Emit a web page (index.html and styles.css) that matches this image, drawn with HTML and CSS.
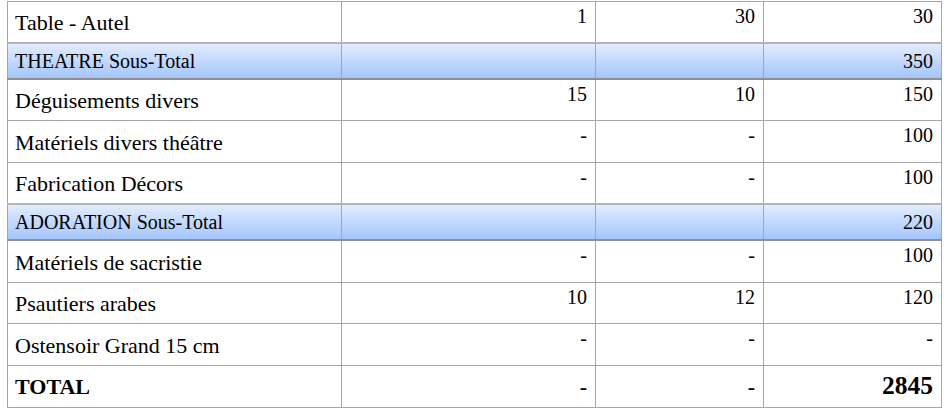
FILE: index.html
```html
<!DOCTYPE html>
<html lang="fr">
<head>
    <meta charset="UTF-8">
    <title>Budget</title>
    <link rel="stylesheet" href="styles.css">
</head>
<body>
<table class="budget">
    <colgroup>
        <col class="col-label">
        <col class="col-qty">
        <col class="col-price">
        <col class="col-total">
    </colgroup>
    <tr>
        <td class="label">Table - Autel</td>
        <td class="num">1</td>
        <td class="num">30</td>
        <td class="num">30</td>
    </tr>
    <tr class="subtotal">
        <td class="label">THEATRE Sous-Total</td>
        <td class="num"></td>
        <td class="num"></td>
        <td class="num">350</td>
    </tr>
    <tr>
        <td class="label">Déguisements divers</td>
        <td class="num">15</td>
        <td class="num">10</td>
        <td class="num">150</td>
    </tr>
    <tr>
        <td class="label">Matériels divers théâtre</td>
        <td class="num">-</td>
        <td class="num">-</td>
        <td class="num">100</td>
    </tr>
    <tr>
        <td class="label">Fabrication Décors</td>
        <td class="num">-</td>
        <td class="num">-</td>
        <td class="num">100</td>
    </tr>
    <tr class="subtotal">
        <td class="label">ADORATION Sous-Total</td>
        <td class="num"></td>
        <td class="num"></td>
        <td class="num">220</td>
    </tr>
    <tr>
        <td class="label">Matériels de sacristie</td>
        <td class="num">-</td>
        <td class="num">-</td>
        <td class="num">100</td>
    </tr>
    <tr>
        <td class="label">Psautiers arabes</td>
        <td class="num">10</td>
        <td class="num">12</td>
        <td class="num">120</td>
    </tr>
    <tr>
        <td class="label">Ostensoir Grand 15 cm</td>
        <td class="num">-</td>
        <td class="num">-</td>
        <td class="num">-</td>
    </tr>
    <tr class="total">
        <td class="label">TOTAL</td>
        <td class="num">-</td>
        <td class="num">-</td>
        <td class="num grand">2845</td>
    </tr>
</table>
</body>
</html>
```

FILE: styles.css
```css
body {
    margin: 0;
    background-color: white;
    font-family: "Liberation Serif", "Times New Roman", serif;
    color: black;
}

.budget {
    border-collapse: collapse;
    table-layout: fixed;
    width: 934px;
    margin: 1px 0 0 7px;
}

.col-label { width: 334px; }
.col-qty { width: 254px; }
.col-price { width: 168px; }
.col-total { width: 178px; }

.budget td {
    border: 1px solid #a6a6a6;
    height: 41.8px;
    box-sizing: border-box;
    padding: 0 8px 0 7px;
    white-space: nowrap;
}

.label {
    font-size: 22px;
    vertical-align: bottom;
    padding-bottom: 6px !important;
}

.num {
    font-size: 20px;
    text-align: right;
    vertical-align: top;
    padding-top: 3px !important;
}

.subtotal td {
    height: 35.8px;
    font-size: 20px;
    vertical-align: bottom;
    padding-top: 0 !important;
    padding-bottom: 5px !important;
    background: linear-gradient(#e2ecfe, #a4c5fb);
    border-top: 2px solid #b4b4b4;
    border-bottom: 2px solid #8f8f8f;
}

.total td {
    font-weight: bold;
    font-size: 22px;
    vertical-align: bottom;
    padding-top: 0 !important;
    padding-bottom: 7px !important;
}

.total .grand {
    font-size: 25.5px;
    padding-bottom: 6px !important;
}
```
